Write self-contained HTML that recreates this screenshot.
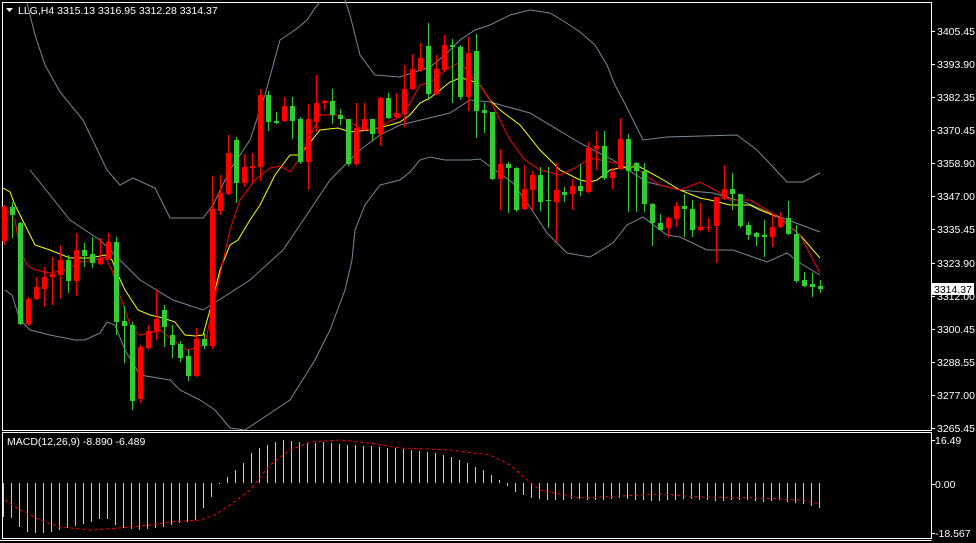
<!DOCTYPE html>
<html><head><meta charset="utf-8"><style>
html,body{margin:0;padding:0;background:#000;width:976px;height:543px;overflow:hidden}
svg{display:block}
text{font-family:"Liberation Sans","DejaVu Sans",sans-serif;font-size:10.5px;fill:#fff}
</style></head><body>
<svg width="976" height="543" viewBox="0 0 976 543" xmlns="http://www.w3.org/2000/svg">
<rect width="976" height="543" fill="#000"/>
<!-- frames -->
<g stroke="#fff" stroke-width="1" fill="none">
<path d="M2.5 2.5H931.5V430.5H2.5Z"/>
<path d="M2.5 432.5H931.5V538.5H2.5Z"/>
<path d="M0 540.5H931.5"/>
</g>
<!-- bollinger -->
<g stroke="#7a8796" stroke-width="1" fill="none">
<polyline points="27,3 35,35 45,65 60,92 83,120 95,145 107,170 120,185 133,178 155,188 170,218 190,218 203,218 213,205 230,170 250,140 265,95 280,40 295,30 307,20 315,8 320,2"/>
<polyline points="345,0 350,15 360,55 375,75 400,77 430,67 445,55 460,40 475,30 490,25 510,15 530,10 550,13 565,22 580,32 595,45 607,65 615,85 623,100 643,140 667,137 737,135 757,150 773,167 787,182 803,182 820,173"/>
<polyline points="30,170 70,220 100,240 140,280 173,300 203,310 230,293 250,280 283,250 300,225 330,180 360,150 380,135 400,125 450,113 470,100 490,102 530,113 580,143 613,160 647,182 680,190 713,193 747,203 780,217 820,232"/>
<polyline points="5,290 12,295 20,320 30,330 50,335 75,340 85,340 100,333 107,322 115,325 125,350 140,375 170,380 180,390 200,400 215,410 230,428 245,430 260,420 290,400 315,360 330,330 345,290 352,260 355,230 365,205 380,185 400,180 410,172 420,160 430,157 445,160 470,160 480,159 513,183 530,207 547,233 567,253 590,257 613,243 627,225 643,217 667,235 680,237 707,250 733,250 767,262 787,253 800,263 820,275"/>
</g>
<!-- MAs -->
<polyline fill="none" stroke="#ffff00" stroke-width="1" points="3,188 10,192 15,205 25,225 35,245 50,250 70,258 90,258 105,255 112,260 118,275 125,290 138,310 150,315 163,318 175,322 185,335 195,336 203,335 210,310 220,270 230,245 238,240 250,220 260,205 275,175 290,155 300,155 320,130 338,128 350,132 370,130 390,125 400,122 410,115 420,103 430,98 440,90 450,82 460,78 470,80 480,85 490,100 500,110 520,125 540,150 560,170 580,180 590,182 597,180 610,170 625,167 640,167 660,178 680,190 700,198 710,200 730,205 750,205 760,210 780,218 800,235 820,258"/>
<polyline fill="none" stroke="#ff0000" stroke-width="1" points="3,210 10,212 15,220 20,250 27,265 35,270 50,273 65,270 80,262 95,260 105,257 112,270 118,290 125,310 132,330 140,335 150,333 160,330 170,338 180,345 187,350 195,348 205,345 212,310 220,275 230,230 240,200 255,180 270,168 280,166 290,172 300,158 320,115 340,115 350,122 360,128 370,130 380,127 390,121 400,117 410,103 420,85 430,82 440,75 445,70 460,62 470,75 480,85 490,100 500,120 510,140 525,160 540,170 560,175 575,168 590,158 600,160 615,163 630,163 645,175 660,185 680,190 700,182 715,190 730,200 750,200 770,212 785,222 800,235 820,273"/>
<!-- candles -->
<g id="c"></g>
<!-- macd -->
<g id="m"></g>
<!-- axis -->
<g stroke="#fff"><path d="M931 31.5h4M931 64.5h4M931 97.5h4M931 130.5h4M931 163.5h4M931 196.5h4M931 229.5h4M931 263.5h4M931 296.5h4M931 329.5h4M931 362.5h4M931 395.5h4M931 428.5h4M931 440.5h4M931 484.5h4M931 533.5h4"/></g>
<text x="937" y="35">3405.45</text>
<text x="937" y="68">3393.90</text>
<text x="937" y="101">3382.35</text>
<text x="937" y="134">3370.45</text>
<text x="937" y="167">3358.90</text>
<text x="937" y="200">3347.00</text>
<text x="937" y="233">3335.45</text>
<text x="937" y="267">3323.90</text>
<text x="937" y="300">3312.00</text>
<text x="937" y="333">3300.45</text>
<text x="937" y="366">3288.55</text>
<text x="937" y="399">3277.00</text>
<text x="937" y="432">3265.45</text>
<rect x="932" y="283" width="42" height="12" fill="#fff"/>
<text x="934" y="293" style="fill:#000">3314.37</text>
<text x="935" y="444">16.49</text>
<text x="935" y="488">0.00</text>
<text x="935" y="537">-18.567</text>
<path d="M6 8h7l-3.5 4z" fill="#fff"/>
<text x="18" y="14">LLG,H4  3315.13 3316.95 3312.28 3314.37</text>
<text x="7" y="445">MACD(12,26,9) -8.890 -6.489</text>
</svg>
<script>
var C=[
"R207 241 205 245","G207 215 202 238","G223 324 222 325","R299 324 297 326","R287 299 277 300","R277 289 267 307","R274 277 257 305","R260 275 245 299","G260 281 255 293","R250 281 233 296",
"G250 256 243 267","G254 263 237 268","R258 264 238 265","R242 259 233 260","G242 322 237 335","G321 326 306 363","G325 401 322 410","R347 399 345 403","R331 348 325 350","R319 332 290 340",
"G310 327 305 347","G335 345 325 358","G344 358 341 362","G356 376 350 381","R339 376 328 377","G339 346 333 349","R209 346 176 349","R193 211 175 215","R153 194 135 195","G140 183 137 203",
"R167 183 154 187","R166 168 153 183","R95 167 89 181","G95 122 91 131","G121 123 112 124","R106 121 97 122","G106 121 97 139","G119 162 117 164","R119 162 104 190","R103 122 75 132",
"R101 103 100 110","G101 115 89 124","G115 119 109 125","G119 164 119 166","R128 164 103 166","R119 130 103 131","G119 134 119 141","R98 134 97 146","G98 118 93 119","R113 117 93 119",
"R89 114 65 127","R69 89 54 90","R58 70 43 72","G46 94 23 100","R69 94 55 95","R45 70 35 72","G45 47 39 103","G47 97 45 100","R53 97 37 111","G51 111 34 138",
"G110 113 103 133","G112 179 112 180","R164 179 149 210","G164 168 162 213","G168 210 167 212","R189 209 165 210","R175 190 171 210","G175 202 167 211","G200 201 167 228","R190 202 163 242",
"G192 195 187 202","R186 194 179 210","G186 191 164 196","R148 192 142 193","R146 149 131 170","G146 178 131 180","R172 178 168 189","R139 169 118 170","G139 171 134 212","G163 171 162 212",
"G171 204 163 212","G204 223 203 246","G223 230 214 231","R218 228 217 237","R206 219 202 227","G206 209 194 237","G209 230 200 237","R227 230 203 231","R227 228 218 232","R197 226 197 263",
"R189 199 165 200","G189 194 173 210","G194 226 194 228","G225 235 222 240","G233 237 232 246","G235 237 220 257","R227 237 213 247","R218 227 212 228","G218 234 201 235","G234 281 225 283",
"G280 286 272 287","G284 287 273 297","G286 289 280 293"];
var s="";
C.forEach(function(c,i){var col=c[0]=="G"?"#32cd32":"#ff0000";var v=c.slice(1).split(" ").map(Number);var x=4+8*i;
s+='<path d="M'+(x+0.5)+' '+v[2]+'V'+v[3]+'" stroke="'+col+'"/>';
s+='<rect x="'+(x-2)+'" y="'+v[0]+'" width="5" height="'+Math.max(1,v[1]-v[0])+'" fill="'+col+'"/>';});
document.getElementById("c").innerHTML=s;
var H=[517,518,527,532,533,533,532,530,528,526,524,522,519,519,525,528,529,530,529,528,527,525,523,522,520,508,497,484,
477,470,463,453,448,445,442,440,441,442,443,443,442,443,444,445,445,446,446,447,448,448,449,450,451,452,453,455,457,460,463,467,470,475,480,
486,492,495,498,499,500,500,500,499,499,500,500,500,499,498,499,500,500,501,501,500,500,499,499,500,500,501,501,500,500,500,501,502,501,500,502,503,504,506,508];
var m="";H.forEach(function(y,i){var x=3.5+8*i;m+='M'+x+' 483V'+y;});
var sig=[[5,500],[20,510],[40,520],[60,527],[90,530],[120,528],[150,525],[170,522],[200,520],[215,515],[230,505],[250,490],[270,465],[290,450],[310,442],[340,440],[370,443],[400,448],[450,450],[490,455],[510,465],[525,478],[540,490],[580,498],[620,496],[660,494],[700,497],[760,498],[800,500],[820,504]];
document.getElementById("m").innerHTML='<path d="'+m+'" stroke="#c8c8c8" fill="none"/><polyline points="'+sig.join(" ")+'" fill="none" stroke="#ff0000" stroke-dasharray="3,3"/>';
</script>
</body></html>
